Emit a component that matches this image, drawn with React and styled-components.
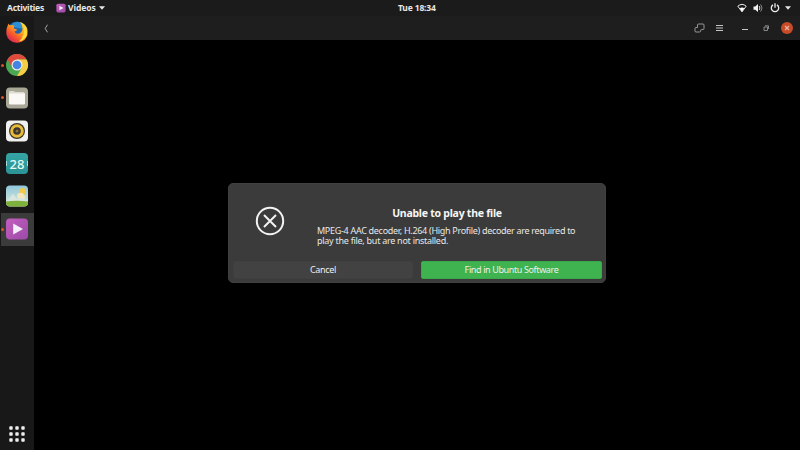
import React from "react";
import styled, { createGlobalStyle } from "styled-components";

const GlobalStyle = createGlobalStyle`
  * { box-sizing: border-box; }
  body { margin: 0; background: #000; overflow: hidden; }
  button { font: inherit; border: 0; padding: 0; }
  svg { display: block; flex: none; }
`;

const Desktop = styled.div`
  width: 800px;
  height: 450px;
  display: flex;
  flex-direction: column;
  background: #000;
  color: #e8e8e8;
  font-family: "Noto Sans", "Open Sans", sans-serif;
  font-size: 9px;
`;

const TopBar = styled.header`
  height: 16px;
  display: grid;
  grid-template-columns: 391px 40px 1fr;
  align-items: start;
  padding: 0 8px 0 7px;
  background: #1b1b1b;
  font-weight: 700;
`;

const TopGroup = styled.div`
  display: flex;
  align-items: center;
  height: 15px;
  justify-content: ${(p) => (p.$end ? "flex-end" : "flex-start")};
`;

const Label = styled.span`
  white-space: nowrap;
  line-height: 15px;
  width: ${(p) => p.$width}px;
  font-size: 8.5px;
  letter-spacing: ${(p) => p.$spacing || 0}px;
  margin-right: ${(p) => p.$gap || 0}px;
`;

const Body = styled.div`
  flex: 1;
  display: flex;
  min-height: 0;
`;

const Dock = styled.nav`
  width: 34px;
  display: flex;
  flex-direction: column;
  background: #181818;
`;

const DockItem = styled.div`
  height: 32.8px;
  margin-left: 1px;
  display: flex;
  align-items: center;
  background: ${(p) => (p.$active ? "#3b3b3b" : "transparent")};
`;

const RunningDot = styled.span`
  width: 3px;
  height: 3px;
  margin-right: 1px;
  border-radius: 50%;
  background: ${(p) => (p.$on ? "#d9532c" : "transparent")};
`;

const AppGrid = styled.div`
  margin: auto 0 8px 9px;
`;

const Window = styled.main`
  flex: 1;
  display: flex;
  flex-direction: column;
`;

const HeaderBar = styled.div`
  height: 24px;
  display: flex;
  align-items: center;
  padding: 0 3px 0 8px;
  background: #1e1e1e;
`;

const HeaderTools = styled.div`
  display: flex;
  align-items: center;
  margin-left: auto;
`;

const Tool = styled.span`
  width: ${(p) => p.$width}px;
  display: flex;
  justify-content: center;
`;

const Stage = styled.div`
  flex: 1;
  padding: 143px 0 0 194px;
`;

const Dialog = styled.section`
  width: 378px;
  height: 100px;
  display: flex;
  flex-direction: column;
  justify-content: space-between;
  padding: 0 3px 3px 4px;
  border-radius: 5px;
  background: #3b3b3b;
  border: 1px solid #404040;
`;

const Message = styled.div`
  display: flex;
`;

const ErrorMark = styled.div`
  width: 84px;
  padding: 22px 0 0 22px;
`;

const Copy = styled.div`
  width: 260px;
  padding-top: 22px;
`;

const Title = styled.h1`
  margin: 0 0 5px;
  font-size: 10.5px;
  line-height: 14px;
  letter-spacing: -0.25px;
  text-align: center;
  color: #f6f6f6;
`;

const Text = styled.p`
  margin: 0;
  font-size: 9px;
  line-height: 11px;
  height: 10px;
  letter-spacing: ${(p) => p.$spacing}px;
  white-space: nowrap;
`;

const Actions = styled.div`
  display: grid;
  grid-template-columns: 180px 181px;
  justify-content: space-between;
  height: 18px;
`;

const Button = styled.button`
  border-radius: 2px;
  line-height: 16px;
  letter-spacing: ${(p) => p.$spacing}px;
  color: #efefef;
  background: ${(p) => (p.$primary ? "#3eb34f" : "#424242")};
  border: 1px solid ${(p) => (p.$primary ? "#39a94a" : "#3f3f3f")};
`;

const Firefox = () => (
  <svg width="24" height="24" viewBox="0 0 24 24">
    <defs>
      <linearGradient id="fox" x1=".85" y1=".1" x2=".2" y2=".9">
        <stop offset="0" stopColor="#ffd838" />
        <stop offset=".4" stopColor="#ffa21c" />
        <stop offset=".7" stopColor="#f7592c" />
        <stop offset="1" stopColor="#dd2a55" />
      </linearGradient>
    </defs>
    <circle cx="12" cy="11.500" r="10" fill="#1d66ad" />
    <path d="M7 4Q11 .5 17 3L19 9L13 8L9 7Z" fill="#2c8fd6" />
    <path d="M3.400 3.500Q4 5.500 5.500 5.200Q7.500 4.800 9.500 6Q8.300 7 9 8.500L12 9.500Q12 11 9.500 11.500Q10.500 14.500 14 13.500Q17.500 12 17.500 8.500Q17.500 5 15 2Q20 3.500 22 8Q24 15 19.500 20Q16 23 11.500 22.700Q3 22 1.300 14Q.7 9 3.400 3.500Z" fill="url(#fox)" />
    <path d="M18.500 4.500Q24 10 21 17Q18 21 14 21.500Q21 15 18.500 4.500Z" fill="#ffd83b" />
  </svg>
);

const Chrome = () => (
  <svg width="24" height="24" viewBox="0 0 24 24">
    <circle cx="12" cy="12" r="11" fill="#4aa852" />
    <path d="M2.470 6.500A11 11 0 0 1 21.530 6.500H12L7.240 14.750Z" fill="#df4a3d" />
    <path d="M21.530 6.500A11 11 0 0 1 12 23L16.760 14.750L12 6.500Z" fill="#f7cd45" />
    <circle cx="12" cy="12" r="5.500" fill="#f0eee9" />
    <circle cx="12" cy="12" r="4.300" fill="#4384e5" />
  </svg>
);

const Files = () => (
  <svg width="24" height="24" viewBox="0 0 24 24">
    <rect x="1" y="1.500" width="22" height="21" rx="4" fill="#a9a796" />
    <path d="M4 6Q4 5 5 5H9L10 6H18Q20 6 20 8V18H4Z" fill="#dddbd0" />
    <path d="M4 7.500H20V17Q20 18.500 18.500 18.500H5.500Q4 18.500 4 17Z" fill="#faf9f5" />
  </svg>
);

const Music = () => (
  <svg width="24" height="24" viewBox="0 0 24 24">
    <rect x="1" y="1.500" width="22" height="21" rx="4" fill="#f0f0ee" />
    <circle cx="12" cy="12" r="8" fill="#39342d" />
    <circle cx="12" cy="12" r="5.300" fill="none" stroke="#e6bb3a" strokeWidth="3" />
    <circle cx="12" cy="12" r="1.500" fill="#88713a" />
  </svg>
);

const CalendarTile = styled.div`
  width: 22px;
  height: 21px;
  margin-left: 1px;
  border-radius: 4px;
  background: linear-gradient(#35a4a4, #2b9395);
  display: flex;
  align-items: center;
  justify-content: space-between;
  color: #e2faf5;
  font-size: 13px;
  font-weight: 500;
  line-height: 20px;
`;

const CalendarNotch = styled.span`
  width: 1px;
  height: 5px;
  background: #a6dcd8;
`;

const Calendar = () => (
  <CalendarTile><CalendarNotch />28<CalendarNotch /></CalendarTile>
);

const Photos = () => (
  <svg width="24" height="24" viewBox="0 0 24 24">
    <defs>
      <clipPath id="photo"><rect x="1" y="1.500" width="22" height="21" rx="4" /></clipPath>
      <linearGradient id="sky" x2="0" y2="1">
        <stop stopColor="#8bc5dc" /><stop offset="1" stopColor="#e4eed9" />
      </linearGradient>
    </defs>
    <g clipPath="url(#photo)">
      <rect width="24" height="24" fill="url(#sky)" />
      <path d="M1 18L8 10L12 15L16 11L23 18Z" fill="#d9e5df" />
      <circle cx="17.500" cy="7.500" r="3.500" fill="#f3c94d" />
      <path d="M12 12Q12 9 15 9Q18 8 19 11Q21 12 20 14H13Z" fill="#f4e7bd" />
      <path d="M1 17.500Q12 16 23 17.500V23H1Z" fill="#7eb23c" />
    </g>
  </svg>
);

const Video = ({ size = 24 }) => (
  <svg width={size} height={size} viewBox="0 0 24 24">
    <defs>
      <linearGradient id="violet" x2="1" y2="1">
        <stop stopColor="#c45dc0" /><stop offset="1" stopColor="#9b4ba7" />
      </linearGradient>
    </defs>
    <rect x="1" y="1.500" width="22" height="21" rx="4" fill="url(#violet)" />
    <path d="M8.200 6.500L18 12L8.200 17.500Z" fill="#f6eef7" />
  </svg>
);

const Caret = () => (
  <svg width="6" height="4"><path d="M0 .3H6L3 3.700Z" fill="#e8e8e8" /></svg>
);

const Wifi = () => (
  <svg width="10" height="10" viewBox="0 0 10 10">
    <path d="M.8 3.200Q5 -.5 9.200 3.200L5 8.800Z" fill="none" stroke="#e8e8e8" strokeWidth="1" />
    <path d="M2.800 5.200Q5 4 7.200 5.200L5 9Z" fill="#fff" />
  </svg>
);

const Sound = () => (
  <svg width="10" height="10" viewBox="0 0 10 10">
    <path d="M.5 3.400H2.300L5 1V9L2.300 6.700H.5Z" fill="#f2f2f2" />
    <path d="M6.200 3Q7.600 5 6.200 7" fill="none" stroke="#ddd" />
    <path d="M7.700 1.500Q10.300 5 7.700 8.500" fill="none" stroke="#8a8a8a" />
  </svg>
);

const Power = () => (
  <svg width="10" height="10" viewBox="0 0 10 10">
    <path d="M3 1.900A3.700 3.700 0 1 0 7 1.900M5 .3V4.800" fill="none" stroke="#eee" strokeWidth="1.300" />
  </svg>
);

const dockApps = [
  { name: "firefox", Icon: Firefox },
  { name: "chrome", Icon: Chrome, running: true },
  { name: "files", Icon: Files, running: true },
  { name: "music", Icon: Music },
  { name: "calendar", Icon: Calendar },
  { name: "photos", Icon: Photos },
  { name: "videos", Icon: Video, running: true, active: true },
];

export default function App() {
  return (
    <Desktop>
      <GlobalStyle />
      <TopBar>
        <TopGroup>
          <Label $width={37} $gap={12} $spacing={-0.25}>Activities</Label>
          <Video size={10} />
          <Label $width={30} $gap={1} $spacing={-0.1}>&nbsp;Videos</Label>
          <Tool $width={10}><Caret /></Tool>
        </TopGroup>
        <Label $width={40} $spacing={-0.15}>Tue 18:34</Label>
        <TopGroup $end>
          <Tool $width={17}><Wifi /></Tool>
          <Tool $width={16}><Sound /></Tool>
          <Tool $width={17}><Power /></Tool>
          <Tool $width={9}><Caret /></Tool>
        </TopGroup>
      </TopBar>
      <Body>
        <Dock>
          {dockApps.map(({ name, Icon, running, active }) => (
            <DockItem key={name} $active={active}>
              <RunningDot $on={running} />
              <Icon />
            </DockItem>
          ))}
          <AppGrid>
            <svg width="16" height="16">
              {[0, 6, 12].map((y) => [0, 6, 12].map((x) => (
                <rect key={`${x}-${y}`} x={x + 0.3} y={y + 0.3} width="3.400" height="3.400" rx=".7" fill="#efefef" />
              )))}
            </svg>
          </AppGrid>
        </Dock>
        <Window>
          <HeaderBar>
            <svg width="8" height="9"><path d="M5.500 .7L3.200 4.500L5.500 8.300" fill="none" stroke="#a5a5a5" /></svg>
            <HeaderTools>
              <Tool $width={10}>
                <svg width="11" height="10" viewBox="0 0 11 10" fill="none" stroke="#a5a5a5" strokeWidth=".9">
                  <path d="M3.500 4.500V2Q3.500 1 4.500 1H9Q10 1 10 2V5.500Q10 6.500 9 6.500H7.500" />
                  <path d="M3.500 4.500H2Q1 4.500 1 5.500V8Q1 9 2 9H5.500Q7 9 7 6.500" />
                </svg>
              </Tool>
              <Tool $width={31}>
                <svg width="7" height="8"><path d="M0 1.500H7M0 4H7M0 6.500H7" stroke="#c4c4c4" /></svg>
              </Tool>
              <Tool $width={20}>
                <svg width="6" height="6"><path d="M0 4.500H6" stroke="#c4c4c4" /></svg>
              </Tool>
              <Tool $width={22}>
                <svg width="6" height="6"><path d="M1 2H4.500V5.500H1ZM2 .8H5.500V4" fill="none" stroke="#929292" strokeWidth=".9" /></svg>
              </Tool>
              <Tool $width={20}>
                <svg width="14" height="14">
                  <circle cx="7" cy="7" r="6" fill="#c94a27" />
                  <path d="M5 5L9 9M9 5L5 9" stroke="#e8b7a8" strokeWidth="1.100" />
                </svg>
              </Tool>
            </HeaderTools>
          </HeaderBar>
          <Stage>
            <Dialog role="dialog">
              <Message>
                <ErrorMark>
                  <svg width="30" height="30" viewBox="0 0 30 30" fill="none" stroke="#f2f2f2">
                    <circle cx="15" cy="15" r="13.200" strokeWidth="2" />
                    <path d="M9 9L21 21M21 9L9 21" strokeWidth="2" />
                  </svg>
                </ErrorMark>
                <Copy>
                  <Title>Unable to play the file</Title>
                  <Text $spacing={-0.3}>MPEG-4 AAC decoder, H.264 (High Profile) decoder are required to</Text>
                  <Text $spacing={-0.27}>play the file, but are not installed.</Text>
                </Copy>
              </Message>
              <Actions>
                <Button $spacing={-0.3}>Cancel</Button>
                <Button $primary $spacing={-0.38}>Find in Ubuntu Software</Button>
              </Actions>
            </Dialog>
          </Stage>
        </Window>
      </Body>
    </Desktop>
  );
}
